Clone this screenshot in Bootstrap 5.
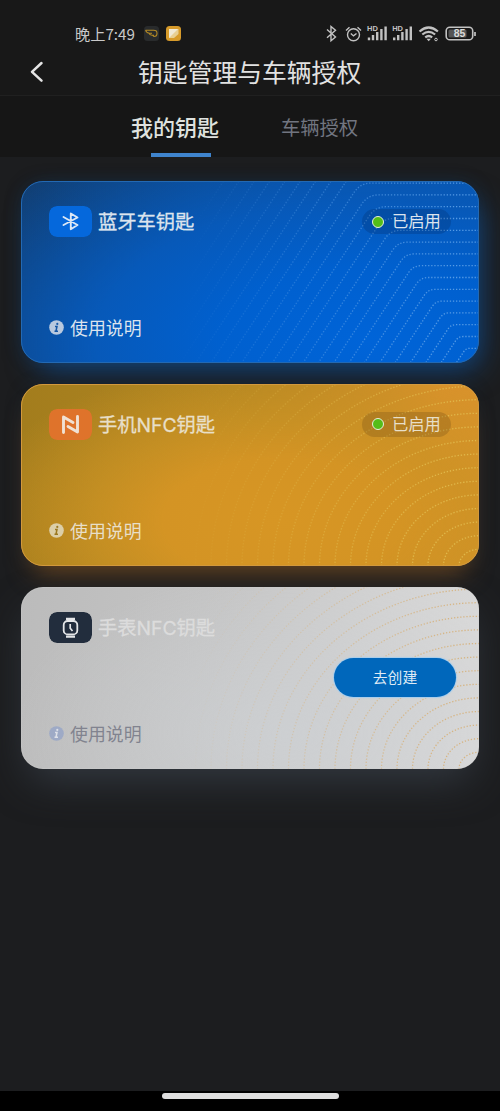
<!DOCTYPE html>
<html lang="zh-CN">
<head>
<meta charset="utf-8">
<meta name="viewport" content="width=device-width, initial-scale=1">
<title>钥匙管理与车辆授权</title>
<link href="https://cdn.jsdelivr.net/npm/bootstrap@5.3.0/dist/css/bootstrap.min.css" rel="stylesheet">
<style>
body{font-family:"Noto Sans CJK SC",sans-serif;background:#1c1d1f;color:#e2e2e2;line-height:1}
.screen{width:500px;height:1111px;overflow:hidden}
.statusbar{height:49px;padding:18px 24px 0 75px;background:#181818;color:#c9c9c9}
.clock{font-size:15.2px;line-height:30px;width:61px;white-space:nowrap}
.titlebar{height:47px;background:#181818;border-bottom:1px solid #202020;padding-left:27px}
.titlebar h1{font-size:24.8px;font-weight:400;line-height:44px;padding-left:91px}
.tabs{height:61px;background:#161616}
.tab-on{margin-left:131px;width:90px;font-size:22px;font-weight:500;line-height:60px;color:#dfe2df;position:relative}
.tab-on::after{content:"";position:absolute;left:20px;bottom:0;width:60px;height:4px;background:#3f84cd}
.tab-off{margin-left:60px;font-size:19.3px;line-height:62px;color:#717580}
.keys{padding:24px 21px 0;gap:20.5px}
.keycard{position:relative;height:182.4px;border-radius:22px;padding:25px 28px 0 28px;color:#dce4ee}
.keycard .dots{position:absolute;inset:0;width:100%;height:100%;border-radius:22px}
.keycard::after{content:"";position:absolute;inset:0;border-radius:22px;border:1px solid var(--edge);pointer-events:none}
.keycard>.d-flex{position:relative}
.blue{--edge:#2369b3;background:radial-gradient(ellipse 92% 118% at 76% 88%,#0064d8 0,#0060cf 35%,#0759b9 65%,rgba(14,77,148,0) 108%),linear-gradient(90deg,#113f74,#0e4b90 60%,#0c55a8);box-shadow:8px 14px 30px -8px #12467f,0 0 20px -4px rgba(18,62,110,.4)}
.gold{--edge:#d3993d;background:radial-gradient(ellipse 65% 85% at 57% 75%,#d79624 0,#d49424 40%,rgba(204,147,36,.75) 65%,rgba(184,136,34,0) 105%),linear-gradient(90deg,#a37d1d 0,#b28622 50%,#d8922b 92%);color:#e8dfc8;box-shadow:0 18px 26px -12px #6b4620,0 0 18px -3px rgba(24,42,60,.4)}
.grey{--edge:#cfcfcf55;background:radial-gradient(ellipse 60% 90% at 58% 80%,rgba(205,208,211,.8),rgba(205,208,211,0)),linear-gradient(100deg,#bbbbbb 0,#c5c5c5 42%,#d3d3d3 75%,#dadada 100%);box-shadow:0 18px 40px -8px #343a42}
.chip{width:43px;height:31px;border-radius:8px}
.keyname{position:relative;top:1px;font-family:Inter,"Noto Sans CJK SC",sans-serif;font-size:19.3px;margin-left:6px;line-height:31px;white-space:nowrap;-webkit-text-stroke:.3px currentColor}
.state{width:89px;height:25px;border-radius:13px;background:rgba(0,30,80,.22);font-size:16.3px;padding-left:10px}
.gold .state{background:rgba(110,75,20,.28)}
.led{width:12px;height:12px;border-radius:50%;background:#54bd18;border:1.3px solid #e8f0dd;margin-right:8px}
.help{font-size:17.9px;margin-top:76px;line-height:30px}
.help svg{margin-right:6px;position:relative;top:-.6px}
.help span,.state span{position:relative;top:-1px}
.create{width:122px;height:39px;border-radius:20px;background:#0067bb;border:0;color:#dfeaf5;font-size:14.8px;line-height:1;padding:0;position:absolute;left:313px;top:71.5px;box-shadow:0 0 1px 1px #a7cdec}
.homebar{margin-top:auto;height:20px;background:#000;padding-top:2px}
.homebar span{width:177px;height:6px;border-radius:3px;background:#dedede}
</style>
</head>
<body>
<main class="screen d-flex flex-column">
<header>
<div class="statusbar d-flex align-items-start">
 <span class="clock">晚上7:49</span>
 <svg class="ms-2" style="margin-top:8px" width="39" height="15" viewBox="0 0 39 15" fill="none">
  <rect x="0" width="15" height="15" rx="3.5" fill="#292b2c"/><path d="M1.500 4.200h7.500q4-.3 4 3 0 3.300-3 3.300l-1.500-1.500M1.500 4.200q1 3 4 3h2.500M5 7.200q.5 2 3 2h2" stroke="#b48a25" stroke-width="1.100"/>
  <rect x="22" width="15" height="15" rx="3.500" fill="#d79b2b"/><path d="M25 3h9.500v5l-4.500 4h-5z" fill="#e8cf93"/><path d="M25 3h9l-9 9z" fill="#f0e9d6"/>
 </svg>
 <svg class="ms-auto" style="margin-top:4px" width="152" height="24" viewBox="324 22 152 24" fill="none" stroke="#c2c2c2" stroke-width="1.4">
  <path d="M327 29.500l8.500 7.500-4.500 3.700V26.500l4.500 3.700-8.500 7.500"/>
  <circle cx="353.500" cy="34.700" r="6"/><path d="M346 30.500l3.500-3.300M361 30.500l-3.500-3.300M350.800 33.500l2.700 2.400 3-2.400"/>
  <g id="sig"><path d="M369 37.500v2.800M373 35v5.300M377.200 32v8.300M381.400 29v11.300M385.600 26.500v13.800" stroke-width="2.400"/>
  <text x="367" y="31.200" font-family="Liberation Sans" font-size="7.500" font-weight="700" fill="#c2c2c2" stroke="none">HD</text></g>
  <use href="#sig" x="25.200"/>
  <path d="M419.500 31.500q9.200-8 18.400 0M422.300 34.500q6.400-5.400 12.800 0M425.200 37.300q3.500-2.600 7 0" stroke-width="2.200"/><path d="M426.500 38.800h4.400l-2.200 2.400z" fill="#c2c2c2" stroke="none"/><circle cx="436" cy="39.500" r="1.300" stroke-width="1"/>
  <rect x="446.200" y="27.200" width="26.500" height="12.600" rx="3.600" stroke-width="1.600"/><rect x="448.500" y="29.500" width="18" height="8" rx="1.500" fill="#555" stroke="none"/><path d="M475 32v4" stroke-width="1.700"/>
  <text x="459.500" y="37.300" text-anchor="middle" font-family="Liberation Sans" font-size="10.500" font-weight="700" fill="#dadada" stroke="none">85</text>
 </svg>
</div>
<div class="titlebar d-flex">
 <svg style="margin-top:11px" width="20" height="24" viewBox="0 0 20 24" fill="none" stroke="#e4e4e4" stroke-width="2.500" stroke-linecap="round" stroke-linejoin="round"><path d="M14.500 3L5 11.800l9.500 8.800"/></svg>
 <h1 class="m-0">钥匙管理与车辆授权</h1>
</div>
<nav class="tabs d-flex"><div class="tab-on">我的钥匙</div><div class="tab-off">车辆授权</div></nav>
</header>

<section class="keys d-flex flex-column">
 <article class="keycard blue">
  <svg class="dots" id="dotsBlue" viewBox="0 0 458 182.400"></svg>
  <div class="d-flex align-items-center">
   <svg class="chip" viewBox="0 0 43 31"><rect width="43" height="31" rx="8" fill="#0568dc"/><path d="M14.500 11l14 8-6.700 4.200V7.500l6.700 4-14 7.500" fill="none" stroke="#dce8f6" stroke-width="1.900" stroke-linejoin="round" stroke-linecap="round"/></svg>
   <span class="keyname">蓝牙车钥匙</span>
   <span class="state ms-auto d-flex align-items-center"><i class="led"></i><span>已启用</span></span>
  </div>
  <div class="help d-flex align-items-center"><svg width="15" height="15" viewBox="0 0 15 15"><circle cx="7.500" cy="7.500" r="7.300" fill="#b9c9df"/><path d="M6 6.500h2l-1 4.500M5.500 11.200h3.500" fill="none" stroke="#1657a5" stroke-width="1.500"/><circle cx="8.300" cy="3.900" r="1.100" fill="#1657a5"/></svg><span>使用说明</span></div>
 </article>

 <article class="keycard gold">
  <svg class="dots" id="dotsGold" viewBox="0 0 458 182.400"></svg>
  <div class="d-flex align-items-center">
   <svg class="chip" viewBox="0 0 43 31"><rect width="43" height="31" rx="8" fill="#df732b"/><path d="M14.500 23.500V8l9.500 5.500M28.500 7.500v15.500l-9.500-5.500" fill="none" stroke="#f0e1d3" stroke-width="2.900" stroke-linejoin="round" stroke-linecap="round"/></svg>
   <span class="keyname">手机NFC钥匙</span>
   <span class="state ms-auto d-flex align-items-center"><i class="led"></i><span>已启用</span></span>
  </div>
  <div class="help d-flex align-items-center"><svg width="15" height="15" viewBox="0 0 15 15"><circle cx="7.500" cy="7.500" r="7.300" fill="#dccfa8"/><path d="M6 6.500h2l-1 4.500M5.500 11.200h3.500" fill="none" stroke="#9b7820" stroke-width="1.500"/><circle cx="8.300" cy="3.900" r="1.100" fill="#9b7820"/></svg><span>使用说明</span></div>
 </article>

 <article class="keycard grey">
  <svg class="dots" id="dotsGrey" viewBox="0 0 458 182.400"></svg>
  <div class="d-flex align-items-center">
   <svg class="chip" viewBox="0 0 43 31"><rect width="43" height="31" rx="8" fill="#222d3d"/><rect x="14.700" y="9" width="13.600" height="13.400" rx="4" fill="none" stroke="#e4e6e8" stroke-width="1.800"/><path d="M17 6.800h9M17 24.700h9" stroke="#e4e6e8" stroke-width="2.300"/><path d="M21.200 12v4.200l2.300 2.800" fill="none" stroke="#e4e6e8" stroke-width="1.700"/></svg>
   <span class="keyname" style="color:#dcdcdc">手表NFC钥匙</span>
  </div>
  <div class="help d-flex align-items-center" style="color:#81838f"><svg width="15" height="15" viewBox="0 0 15 15"><circle cx="7.500" cy="7.500" r="7.300" fill="#9eaac6"/><path d="M6 6.500h2l-1 4.500M5.500 11.200h3.500" fill="none" stroke="#dde0e8" stroke-width="1.500"/><circle cx="8.300" cy="3.900" r="1.100" fill="#dde0e8"/></svg><span>使用说明</span></div>
  <button class="create">去创建</button>
 </article>
</section>

<footer class="homebar d-flex justify-content-center"><span></span></footer>
</main>
<script src="https://cdn.jsdelivr.net/npm/bootstrap@5.3.0/dist/js/bootstrap.bundle.min.js"></script>
<script>
// Dotted contour lines, fading out towards the left of each card
function draw(id, color, shape, count) {
  let d = '';
  for (let k = 0; k < count; k++) d += shape(k);
  document.getElementById(id).innerHTML =
    `<defs><linearGradient id="${id}G" gradientUnits="userSpaceOnUse" x1="170" y1="60" x2="430" y2="90">
     <stop offset="0" stop-color="${color}" stop-opacity="0"/><stop offset="1" stop-color="${color}"/></linearGradient></defs>
     <path d="${d}" fill="none" stroke="url(#${id}G)" stroke-width="1.3" stroke-dasharray="1.3 1.8"/>`;
}
const bent = k => {
  const y = 167.3 - 11.8 * k, x = 445 - 7.55 * k, r = Math.min(4 + k * .6, 11);
  return `M458 ${y}H${x + r}Q${x} ${y} ${x - r * .55} ${y + r * .83}L${x - (182 - y) * .66} 182`;
};
const arc = k => {
  const rx = 20 + 15.5 * k, ry = 16.7 + 13.6 * k;
  return `M${458 - rx} 182A${rx} ${ry} 0 0 1 458 ${182 - ry}`;
};
draw('dotsBlue', 'rgb(85,155,230)', bent, 24);
draw('dotsGold', 'rgb(224,184,74)', arc, 21);
draw('dotsGrey', 'rgb(214,180,130)', arc, 21);
</script>
</body>
</html>
